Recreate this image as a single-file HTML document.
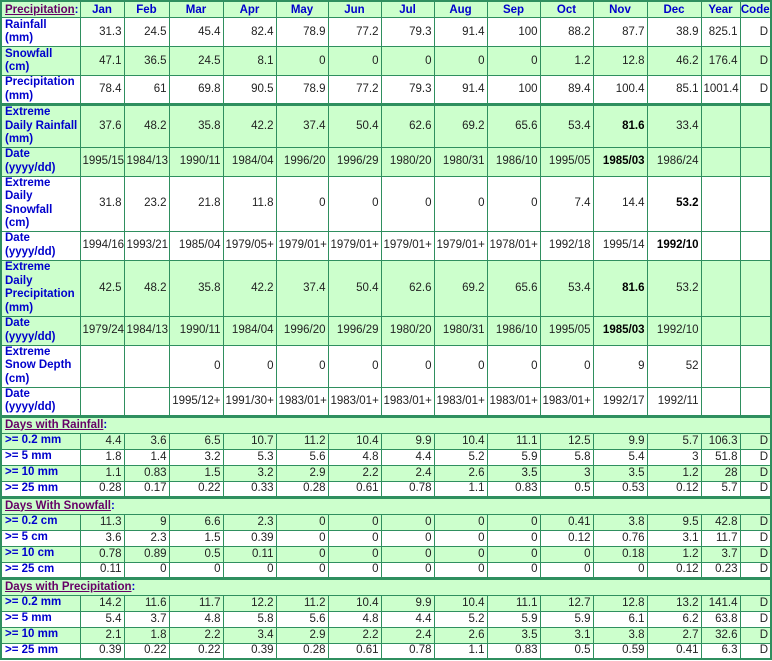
<!DOCTYPE html>
<html><head><meta charset="utf-8"><style>
body{margin:0;background:#fff;}
table{border-collapse:collapse;table-layout:fixed;width:771px;font-family:"Liberation Sans",sans-serif;font-size:11.5px;color:#222;border:2px solid #2f8f5f;}
td{border:1px solid #2f8f5f;padding:0 2px;text-align:right;vertical-align:middle;line-height:13px;overflow:hidden;white-space:nowrap;}
td.l{text-align:left;color:#0000cc;font-weight:bold;white-space:normal;line-height:13.5px;padding-left:3px;font-size:11.5px}
th{border:1px solid #2f8f5f;color:#0000cc;font-weight:bold;background:#ccffcc;height:15px;padding:0;font-size:11.5px}
tr.g td{background:#ccffcc}
tr.w td{background:#fff}
tr.s td{border-top:3px solid #2f8f5f}
tr.h td{background:#ccffcc;text-align:left;height:15px;border-top:3px solid #2f8f5f;padding-left:3px;font-weight:bold;color:#0000cc;font-size:11.5px}
a{color:#660066;text-decoration:underline}
b{color:#000}
</style></head><body>
<table>
<colgroup><col style="width:79px"><col style="width:44px"><col style="width:45px"><col style="width:54px"><col style="width:53px"><col style="width:52px"><col style="width:53px"><col style="width:53px"><col style="width:53px"><col style="width:53px"><col style="width:53px"><col style="width:54px"><col style="width:54px"><col style="width:39px"><col style="width:31px"></colgroup>
<tr><th style="text-align:left;padding-left:3px"><a>Precipitation</a>:</th><th>Jan</th><th>Feb</th><th>Mar</th><th>Apr</th><th>May</th><th>Jun</th><th>Jul</th><th>Aug</th><th>Sep</th><th>Oct</th><th>Nov</th><th>Dec</th><th>Year</th><th>Code</th></tr>
<tr class="w" style="height:29px"><td class="l">Rainfall (mm)</td><td>31.3</td><td>24.5</td><td>45.4</td><td>82.4</td><td>78.9</td><td>77.2</td><td>79.3</td><td>91.4</td><td>100</td><td>88.2</td><td>87.7</td><td>38.9</td><td>825.1</td><td>D</td></tr>
<tr class="g" style="height:29px"><td class="l">Snowfall (cm)</td><td>47.1</td><td>36.5</td><td>24.5</td><td>8.1</td><td>0</td><td>0</td><td>0</td><td>0</td><td>0</td><td>1.2</td><td>12.8</td><td>46.2</td><td>176.4</td><td>D</td></tr>
<tr class="w" style="height:29px"><td class="l">Precipitation (mm)</td><td>78.4</td><td>61</td><td>69.8</td><td>90.5</td><td>78.9</td><td>77.2</td><td>79.3</td><td>91.4</td><td>100</td><td>89.4</td><td>100.4</td><td>85.1</td><td>1001.4</td><td>D</td></tr>
<tr class="g s" style="height:42px"><td class="l">Extreme Daily Rainfall (mm)</td><td>37.6</td><td>48.2</td><td>35.8</td><td>42.2</td><td>37.4</td><td>50.4</td><td>62.6</td><td>69.2</td><td>65.6</td><td>53.4</td><td><b>81.6</b></td><td>33.4</td><td></td><td></td></tr>
<tr class="g" style="height:29px"><td class="l">Date (yyyy/dd)</td><td>1995/15</td><td>1984/13</td><td>1990/11</td><td>1984/04</td><td>1996/20</td><td>1996/29</td><td>1980/20</td><td>1980/31</td><td>1986/10</td><td>1995/05</td><td><b>1985/03</b></td><td>1986/24</td><td></td><td></td></tr>
<tr class="w" style="height:55px"><td class="l">Extreme Daily Snowfall (cm)</td><td>31.8</td><td>23.2</td><td>21.8</td><td>11.8</td><td>0</td><td>0</td><td>0</td><td>0</td><td>0</td><td>7.4</td><td>14.4</td><td><b>53.2</b></td><td></td><td></td></tr>
<tr class="w" style="height:29px"><td class="l">Date (yyyy/dd)</td><td>1994/16</td><td>1993/21</td><td>1985/04</td><td>1979/05+</td><td>1979/01+</td><td>1979/01+</td><td>1979/01+</td><td>1979/01+</td><td>1978/01+</td><td>1992/18</td><td>1995/14</td><td><b>1992/10</b></td><td></td><td></td></tr>
<tr class="g" style="height:56px"><td class="l">Extreme Daily Precipitation (mm)</td><td>42.5</td><td>48.2</td><td>35.8</td><td>42.2</td><td>37.4</td><td>50.4</td><td>62.6</td><td>69.2</td><td>65.6</td><td>53.4</td><td><b>81.6</b></td><td>53.2</td><td></td><td></td></tr>
<tr class="g" style="height:29px"><td class="l">Date (yyyy/dd)</td><td>1979/24</td><td>1984/13</td><td>1990/11</td><td>1984/04</td><td>1996/20</td><td>1996/29</td><td>1980/20</td><td>1980/31</td><td>1986/10</td><td>1995/05</td><td><b>1985/03</b></td><td>1992/10</td><td></td><td></td></tr>
<tr class="w" style="height:42px"><td class="l">Extreme Snow Depth (cm)</td><td></td><td></td><td>0</td><td>0</td><td>0</td><td>0</td><td>0</td><td>0</td><td>0</td><td>0</td><td>9</td><td>52</td><td></td><td></td></tr>
<tr class="w" style="height:29px"><td class="l">Date (yyyy/dd)</td><td></td><td></td><td>1995/12+</td><td>1991/30+</td><td>1983/01+</td><td>1983/01+</td><td>1983/01+</td><td>1983/01+</td><td>1983/01+</td><td>1983/01+</td><td>1992/17</td><td>1992/11</td><td></td><td></td></tr>
<tr class="h"><td colspan="15"><a>Days with Rainfall</a>:</td></tr>
<tr class="g" style="height:16px"><td class="l">&gt;= 0.2 mm</td><td>4.4</td><td>3.6</td><td>6.5</td><td>10.7</td><td>11.2</td><td>10.4</td><td>9.9</td><td>10.4</td><td>11.1</td><td>12.5</td><td>9.9</td><td>5.7</td><td>106.3</td><td>D</td></tr>
<tr class="w" style="height:16px"><td class="l">&gt;= 5 mm</td><td>1.8</td><td>1.4</td><td>3.2</td><td>5.3</td><td>5.6</td><td>4.8</td><td>4.4</td><td>5.2</td><td>5.9</td><td>5.8</td><td>5.4</td><td>3</td><td>51.8</td><td>D</td></tr>
<tr class="g" style="height:16px"><td class="l">&gt;= 10 mm</td><td>1.1</td><td>0.83</td><td>1.5</td><td>3.2</td><td>2.9</td><td>2.2</td><td>2.4</td><td>2.6</td><td>3.5</td><td>3</td><td>3.5</td><td>1.2</td><td>28</td><td>D</td></tr>
<tr class="w" style="height:16px"><td class="l">&gt;= 25 mm</td><td>0.28</td><td>0.17</td><td>0.22</td><td>0.33</td><td>0.28</td><td>0.61</td><td>0.78</td><td>1.1</td><td>0.83</td><td>0.5</td><td>0.53</td><td>0.12</td><td>5.7</td><td>D</td></tr>
<tr class="h"><td colspan="15"><a>Days With Snowfall</a>:</td></tr>
<tr class="g" style="height:16px"><td class="l">&gt;= 0.2 cm</td><td>11.3</td><td>9</td><td>6.6</td><td>2.3</td><td>0</td><td>0</td><td>0</td><td>0</td><td>0</td><td>0.41</td><td>3.8</td><td>9.5</td><td>42.8</td><td>D</td></tr>
<tr class="w" style="height:16px"><td class="l">&gt;= 5 cm</td><td>3.6</td><td>2.3</td><td>1.5</td><td>0.39</td><td>0</td><td>0</td><td>0</td><td>0</td><td>0</td><td>0.12</td><td>0.76</td><td>3.1</td><td>11.7</td><td>D</td></tr>
<tr class="g" style="height:16px"><td class="l">&gt;= 10 cm</td><td>0.78</td><td>0.89</td><td>0.5</td><td>0.11</td><td>0</td><td>0</td><td>0</td><td>0</td><td>0</td><td>0</td><td>0.18</td><td>1.2</td><td>3.7</td><td>D</td></tr>
<tr class="w" style="height:16px"><td class="l">&gt;= 25 cm</td><td>0.11</td><td>0</td><td>0</td><td>0</td><td>0</td><td>0</td><td>0</td><td>0</td><td>0</td><td>0</td><td>0</td><td>0.12</td><td>0.23</td><td>D</td></tr>
<tr class="h"><td colspan="15"><a>Days with Precipitation</a>:</td></tr>
<tr class="g" style="height:16px"><td class="l">&gt;= 0.2 mm</td><td>14.2</td><td>11.6</td><td>11.7</td><td>12.2</td><td>11.2</td><td>10.4</td><td>9.9</td><td>10.4</td><td>11.1</td><td>12.7</td><td>12.8</td><td>13.2</td><td>141.4</td><td>D</td></tr>
<tr class="w" style="height:16px"><td class="l">&gt;= 5 mm</td><td>5.4</td><td>3.7</td><td>4.8</td><td>5.8</td><td>5.6</td><td>4.8</td><td>4.4</td><td>5.2</td><td>5.9</td><td>5.9</td><td>6.1</td><td>6.2</td><td>63.8</td><td>D</td></tr>
<tr class="g" style="height:16px"><td class="l">&gt;= 10 mm</td><td>2.1</td><td>1.8</td><td>2.2</td><td>3.4</td><td>2.9</td><td>2.2</td><td>2.4</td><td>2.6</td><td>3.5</td><td>3.1</td><td>3.8</td><td>2.7</td><td>32.6</td><td>D</td></tr>
<tr class="w" style="height:16px"><td class="l">&gt;= 25 mm</td><td>0.39</td><td>0.22</td><td>0.22</td><td>0.39</td><td>0.28</td><td>0.61</td><td>0.78</td><td>1.1</td><td>0.83</td><td>0.5</td><td>0.59</td><td>0.41</td><td>6.3</td><td>D</td></tr>
</table>
</body></html>
